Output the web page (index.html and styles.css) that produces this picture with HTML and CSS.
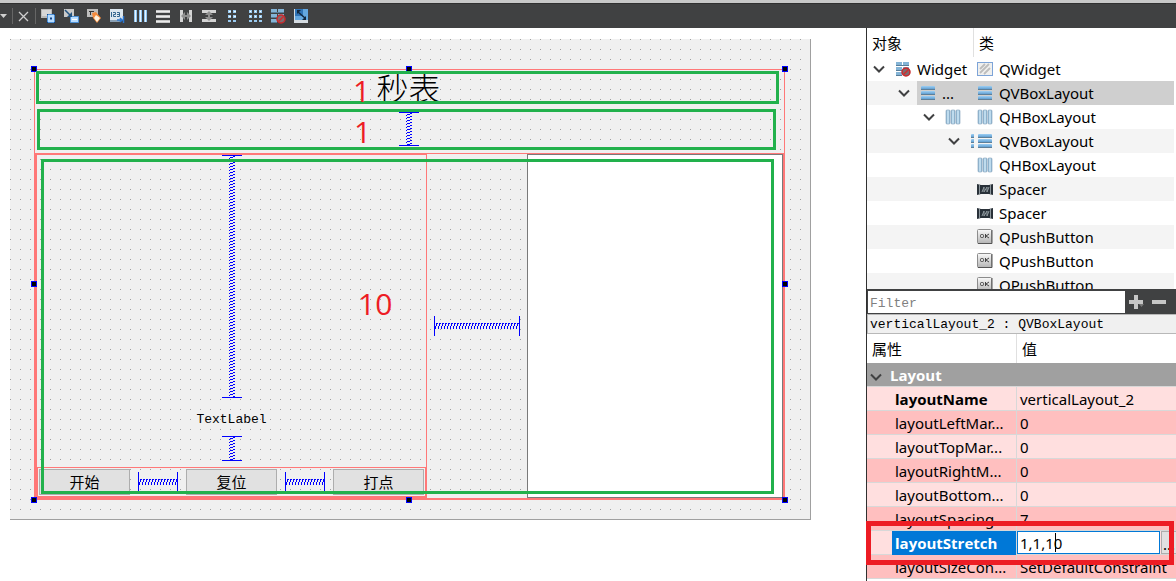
FILE: index.html
```html
<!DOCTYPE html>
<html lang="zh-CN">
<head>
<meta charset="utf-8">
<title>Widget - 设计</title>
<link rel="stylesheet" href="styles.css">
</head>
<body>
<svg class="defs" aria-hidden="true">
  <defs>
    <pattern id="zig-h" width="3" height="6" patternUnits="userSpaceOnUse"><path d="M2 0h1v1h-1zM1 0h1v3h-1zM0 3h1v3h-1z" fill="#00f" shape-rendering="crispEdges"/></pattern>
    <pattern id="zig-v" width="6" height="3" patternUnits="userSpaceOnUse"><path d="M4 0h2v1h-2zM1 1h3v1h-3zM0 2h1v1h-1z" fill="#00f" shape-rendering="crispEdges"/></pattern>
    <linearGradient id="blue-v" x2="0" y2="1"><stop stop-color="#9fd0f4"/><stop offset="1" stop-color="#4c8fc6"/></linearGradient>
    <linearGradient id="blue-h"><stop stop-color="#7fa9c6"/><stop offset=".5" stop-color="#d3ecfb"/><stop offset="1" stop-color="#7fa9c6"/></linearGradient>
    <linearGradient id="grey-v" x2="0" y2="1"><stop stop-color="#fafafa"/><stop offset="1" stop-color="#b4b4b4"/></linearGradient>
    <symbol id="i-rows" viewBox="0 0 16 16"><g fill="url(#blue-v)"><rect x="1" y="1" width="14" height="4" rx="1"/><rect x="1" y="6" width="14" height="4" rx="1"/><rect x="1" y="11" width="14" height="4" rx="1"/></g><path d="M1 4.500h14M1 9.500h14M1 14.500h14" stroke="#5f7f98"/></symbol>
    <symbol id="i-cols" viewBox="0 0 16 16"><g fill="url(#blue-h)" stroke="#7f9fb8" stroke-width=".6"><rect x="1" y="1" width="4" height="14" rx="1"/><rect x="6" y="1" width="4" height="14" rx="1"/><rect x="11" y="1" width="4" height="14" rx="1"/></g></symbol>
    <symbol id="i-break" viewBox="0 0 16 16"><g fill="#84b4d6"><rect x="1" y="1" width="6" height="3"/><rect x="8" y="1" width="6" height="3"/><rect x="1" y="6" width="6" height="3"/><rect x="8" y="6" width="6" height="3"/><rect x="1" y="11" width="6" height="3"/></g><path d="M1 4.500h13M1 9.500h13M1 14.500h6" stroke="#587d98"/><circle cx="11" cy="11" r="4" fill="#7e6c70" stroke="#c9282b" stroke-width="1.500"/><path d="M8.500 13.500l5-5" stroke="#d32a2c" stroke-width="1.500"/></symbol>
    <symbol id="i-widget" viewBox="0 0 16 16"><rect x=".5" y="1.500" width="15" height="13" fill="#f0f0ee" stroke="#7da4d8"/><path d="M3 8l5-5M3 12l9-9M7 13l6-6" stroke="#bdbdbd" stroke-width="1.800"/></symbol>
    <symbol id="i-spacer" viewBox="0 0 16 16"><path d="M0 3l4 1h8l4-1v11l-4-1H4l-4 1z" fill="#293139"/><path d="M2.500 4v9M13.500 4v9" stroke="#8d979d"/><path d="M5 11l2-5v5l3-5v5l2-5" fill="none" stroke="#8f999e"/></symbol>
    <symbol id="i-ok" viewBox="0 0 16 16"><rect x=".5" y=".5" width="14" height="14" rx="1" fill="url(#grey-v)" stroke="#8c8c8c"/><path d="M1 14.500h14V1" fill="none" stroke="#555"/><rect x="3.500" y="5.500" width="3" height="3" rx="1" fill="none" stroke="#444"/><path d="M8.500 5v4M12 5l-3 2 3 2" fill="none" stroke="#444"/></symbol>
    <symbol id="i-chev" viewBox="0 0 12 8"><path d="M1 1.500l5 5 5-5" fill="none" stroke="#404142" stroke-width="2"/></symbol>
  </defs>
</svg>

<header class="toolbar">
  <button class="tool tool-drop" aria-label="菜单"><svg viewBox="0 0 8 16"><path d="M0 6h7l-3.500 4z" fill="#d0d0d0"/></svg></button>
  <span class="bar"></span>
  <button class="tool tool-close" aria-label="关闭"><svg viewBox="0 0 16 16"><path d="M3 4l9 9M12 4l-9 9" stroke="#cfcfcf" stroke-width="1.300"/></svg></button>
  <span class="bar"></span>
  <div class="tools">
    <button class="tool" aria-label="编辑控件"><svg viewBox="0 0 16 16"><path d="M1 1h11v9H1z" fill="#b9b9b9"/><path d="M2 2h9v6H2z" fill="#d6d6d6"/><path d="M7.500 6.500h7v8h-7z" fill="#b8dcff" stroke="#4d91d7"/><path d="M10 9.500h2v2h-2z" fill="#12448a"/><path d="M7 6h1v1H7zM14 6h1v1h-1zM7 14h1v1H7zM14 14h1v1h-1z" fill="#12448a"/></svg></button>
    <button class="tool" aria-label="编辑信号/槽"><svg viewBox="0 0 16 16"><path d="M1 1h10v8H1z" fill="#c9c9c9"/><path d="M7.500 8.500h8v6h-8z" fill="#b8dcff" stroke="#4d91d7"/><path d="M9 11.500h5" stroke="#fff"/><path d="M2 2l6 6" stroke="#225381" stroke-width="1.500"/><path d="M9 4v5H4z" fill="#225381"/></svg></button>
    <button class="tool" aria-label="编辑伙伴"><svg viewBox="0 0 16 16"><path d="M1 1h11v8H1z" fill="#bdbdbd"/><path d="M3 3.500h5M4.500 3v4" stroke="#333"/><path d="M6 5l4-1 5 6-4 5-4-5z" fill="#f58b3d"/><path d="M10 7l4 3-3 4-3-4z" fill="#fff3df"/></svg></button>
    <button class="tool" aria-label="编辑 Tab 顺序"><svg viewBox="0 0 16 16"><path d="M1 1h13v11H1z" fill="#dce7ef"/><path d="M1 12h10v2H1z" fill="#8aa0b4"/><path d="M2.500 4v5M4 4.500h2.500v2H4.500v2h2.500M8 4.500h2.500v4H8M8 6.500h2" fill="none" stroke="#34668e"/><path d="M8 12h5M11 10l2 2-2 2M14.500 8v7" fill="none" stroke="#2b75ce" stroke-width="1.500"/></svg></button>
    <button class="tool" aria-label="水平布局"><svg viewBox="0 0 16 16"><path d="M2 2h3v12H2zM7 2h3v12H7zM12 2h3v12h-3z" fill="#8fc3ee"/><path d="M3 2h1v12H3zM8 2h1v12H8zM13 2h1v12h-1z" fill="#e8f5ff"/></svg></button>
    <button class="tool" aria-label="垂直布局"><svg viewBox="0 0 16 16"><path d="M1 2h14v3H1zM1 7h14v3H1zM1 12h14v3H1z" fill="#c8c8c8"/><path d="M1 3.500h14M1 8.500h14M1 13.500h14" stroke="#ececec"/></svg></button>
    <button class="tool" aria-label="水平分裂器"><svg viewBox="0 0 16 16"><path d="M2 2h3v12H2zM11 2h3v12h-3z" fill="#d4d4d4"/><path d="M3 8l4-4v3h2V4l4 4-4 4V9H7v3z" fill="#8f8f8f"/></svg></button>
    <button class="tool" aria-label="垂直分裂器"><svg viewBox="0 0 16 16"><path d="M1 2h14v3H1zM1 11h14v3H1z" fill="#d4d4d4"/><path d="M8 3l4 4H9v2h3l-4 4-4-4h3V7H4z" fill="#8f8f8f"/></svg></button>
    <button class="tool" aria-label="窗体布局"><svg viewBox="0 0 16 16"><path d="M4 2h3v3H4zM9 2h3v3H9zM4 7h3v3H4zM9 7h3v3H9zM4 12h3v2H4zM9 12h3v2H9z" fill="#9bcbf1"/><path d="M5 3h2v1H5zM10 3h2v1h-2zM5 8h2v1H5zM10 8h2v1h-2z" fill="#eff8ff"/></svg></button>
    <button class="tool" aria-label="栅格布局"><svg viewBox="0 0 16 16"><path d="M2 2h3v3H2zM7 2h3v3H7zM12 2h3v3h-3zM2 7h3v3H2zM7 7h3v3H7zM12 7h3v3h-3zM2 12h3v2H2zM7 12h3v2H7zM12 12h3v2h-3z" fill="#9bcbf1"/><path d="M3 3h1v1H3zM8 3h1v1H8zM13 3h1v1h-1zM3 8h1v1H3zM8 8h1v1H8zM13 8h1v1h-1z" fill="#fff"/></svg></button>
    <button class="tool" aria-label="打破布局"><svg><use href="#i-break"/></svg></button>
    <button class="tool" aria-label="调整大小"><svg viewBox="0 0 16 16"><path d="M1 1h14v14H1z" fill="#d5dce2"/><path d="M2 1h13v11H2z" fill="#64a7de"/><path d="M2 1h8v7H2z" fill="#2f73b5"/><path d="M5 4l7 6" stroke="#10263d" stroke-width="1.500"/><path d="M4 2h4L4 6zM13 12V8l-4 4z" fill="#10263d"/></svg></button>
  </div>
</header>

<div class="workspace">
  <main class="canvas">
    <section class="form">
      <div class="layout-outer">
        <h1 class="form-title">秒表</h1>
        <div class="spacer-row"><div class="vspacer"><svg><rect width="6" height="100%" fill="url(#zig-v)"/></svg></div></div>
        <div class="layout-body">
          <div class="layout-left">
            <div class="vspacer"><svg><rect width="6" height="100%" fill="url(#zig-v)"/></svg></div>
            <span class="text-label">TextLabel</span>
            <div class="vspacer vspacer-small"><svg><rect width="6" height="100%" fill="url(#zig-v)"/></svg></div>
            <div class="button-row">
              <button class="push">开始</button>
              <div class="hspacer"><svg><rect width="100%" height="6" fill="url(#zig-h)"/></svg></div>
              <button class="push">复位</button>
              <div class="hspacer"><svg><rect width="100%" height="6" fill="url(#zig-h)"/></svg></div>
              <button class="push">打点</button>
            </div>
          </div>
          <div class="hspacer hspacer-wide"><svg><rect width="100%" height="6" fill="url(#zig-h)"/></svg></div>
          <div class="text-area"></div>
        </div>
        <i class="handle h-tl"></i><i class="handle h-tc"></i><i class="handle h-tr"></i>
        <i class="handle h-ml"></i><i class="handle h-mr"></i>
        <i class="handle h-bl"></i><i class="handle h-bc"></i><i class="handle h-br"></i>
        <div class="mark mark-title"><span>1</span></div>
        <div class="mark mark-space"><span>1</span></div>
        <div class="mark mark-body"><span>10</span></div>
      </div>
    </section>
  </main>

  <aside class="dock">
    <div class="tree-pane">
      <table class="tree">
        <colgroup><col class="c-object"><col></colgroup>
        <thead><tr><th>对象</th><th>类</th></tr></thead>
        <tbody>
          <tr><td><div class="node lv0"><svg class="chev"><use href="#i-chev"/></svg><span class="name"><svg class="ico"><use href="#i-break"/></svg>Widget</span></div></td><td><div class="cls"><svg class="ico"><use href="#i-widget"/></svg>QWidget</div></td></tr>
          <tr class="selected"><td><div class="node lv1"><svg class="chev"><use href="#i-chev"/></svg><span class="name"><svg class="ico"><use href="#i-rows"/></svg>...</span></div></td><td><div class="cls"><svg class="ico"><use href="#i-rows"/></svg>QVBoxLayout</div></td></tr>
          <tr><td><div class="node lv2"><svg class="chev"><use href="#i-chev"/></svg><span class="name"><svg class="ico"><use href="#i-cols"/></svg></span></div></td><td><div class="cls"><svg class="ico"><use href="#i-cols"/></svg>QHBoxLayout</div></td></tr>
          <tr><td><div class="node lv3"><svg class="chev"><use href="#i-chev"/></svg><span class="name"><svg class="ico"><use href="#i-rows"/></svg></span></div></td><td><div class="cls"><svg class="ico"><use href="#i-rows"/></svg>QVBoxLayout</div></td></tr>
          <tr><td></td><td><div class="cls"><svg class="ico"><use href="#i-cols"/></svg>QHBoxLayout</div></td></tr>
          <tr><td></td><td><div class="cls"><svg class="ico"><use href="#i-spacer"/></svg>Spacer</div></td></tr>
          <tr><td></td><td><div class="cls"><svg class="ico"><use href="#i-spacer"/></svg>Spacer</div></td></tr>
          <tr><td></td><td><div class="cls"><svg class="ico"><use href="#i-ok"/></svg>QPushButton</div></td></tr>
          <tr><td></td><td><div class="cls"><svg class="ico"><use href="#i-ok"/></svg>QPushButton</div></td></tr>
          <tr><td></td><td><div class="cls"><svg class="ico"><use href="#i-ok"/></svg>QPushButton</div></td></tr>
        </tbody>
      </table>
    </div>
    <div class="filter-bar">
      <input class="filter" type="text" placeholder="Filter" aria-label="Filter">
      <button class="fbtn" aria-label="添加"><svg viewBox="0 0 16 16"><path d="M6 1h4v5h5v4h-5v5H6v-5H1V6h5z" fill="#c6c6c6"/><path d="M11 10h5l-2.500 3z" fill="#777"/></svg></button>
      <button class="fbtn" aria-label="删除"><svg viewBox="0 0 16 16"><path d="M1 6h14v4H1z" fill="#c6c6c6"/></svg></button>
    </div>
    <div class="object-name">verticalLayout_2 : QVBoxLayout</div>
    <div class="props-pane">
      <table class="props">
        <colgroup><col class="c-prop"><col></colgroup>
        <thead><tr><th>属性</th><th>值</th></tr></thead>
        <tbody>
          <tr class="group"><th colspan="2"><svg class="chev"><use href="#i-chev"/></svg>Layout</th></tr>
          <tr><td><b>layoutName</b></td><td>verticalLayout_2</td></tr>
          <tr><td>layoutLeftMar...</td><td>0</td></tr>
          <tr><td>layoutTopMar...</td><td>0</td></tr>
          <tr><td>layoutRightM...</td><td>0</td></tr>
          <tr><td>layoutBottom...</td><td>0</td></tr>
          <tr><td>layoutSpacing</td><td>7</td></tr>
          <tr class="editing"><td><label for="stretch">layoutStretch</label></td><td><div class="editor"><div class="field"><input id="stretch" type="text" value="1,1,10"><i class="caret"></i></div><button class="more">...</button></div></td></tr>
          <tr><td>layoutSizeCon...</td><td>SetDefaultConstraint</td></tr>
        </tbody>
      </table>
      <div class="mark-stretch"></div>
    </div>
  </aside>
</div>
</body>
</html>
```
FILE: styles.css
```css
* { box-sizing: border-box; }
body {
  margin: 0;
  height: 100vh;
  display: flex;
  flex-direction: column;
  overflow: hidden;
  background: #fff;
  color: #000;
  font: 15px/24px "Noto Sans", "Noto Sans CJK SC", sans-serif;
}
b, label, .group { font-family: "Open Sans", sans-serif; }
button, input { font: inherit; color: inherit; margin: 0; padding: 0; border: 0; border-radius: 0; background: none; }
svg { display: block; }
.defs { position: absolute; width: 0; height: 0; }

/* toolbar */
.toolbar {
  display: flex;
  align-items: center;
  height: 28px;
  flex: none;
  border-top: 3px solid #c8c8c8;
  background: #404142;
  box-shadow: inset 0 1px #303030;
}
.tool { width: 16px; height: 16px; flex: none; }
.tool svg { width: 16px; height: 16px; }
.tool-drop, .tool-drop svg { width: 8px; }
.bar { width: 1px; height: 16px; margin: 0 4px; background: #666; }
.tool-close { margin: 0 -1px; }
.tools { display: flex; gap: 7px; }

.workspace { flex: 1; display: flex; min-height: 0; }

/* form canvas */
.canvas { flex: 1; display: flex; min-width: 0; padding: 11px 55px 61px 10px; }
.form {
  flex: 1;
  display: flex;
  padding: 30px 25px 19px 24px;
  border: solid #a0a0a0;
  border-width: 0 1px 1px 0;
  background-color: #f0f0f0;
  background-image: linear-gradient(90deg, transparent 1px, #f0f0f0 1px), linear-gradient(#a0a0a0 1px, #f0f0f0 1px);
  background-size: 10px 10px;
}
.layout-outer {
  position: relative;
  flex: 1;
  display: flex;
  flex-direction: column;
  border: 1px solid #ff7878;
}
.form-title {
  margin: 0;
  height: 35px;
  padding-right: 2px;
  text-align: center;
  font: 300 32px/34px "Noto Sans CJK SC", sans-serif;
}
.spacer-row { display: flex; justify-content: center; height: 48px; padding: 7px 2px 7px 0; }
.vspacer {
  width: 20px;
  display: flex;
  justify-content: center;
  border: solid #00f;
  border-width: 1px 0;
}
.vspacer svg { width: 6px; height: 100%; }
.layout-body { flex: 1; display: flex; border: 1px solid #ff7878; min-height: 0; }
.layout-left {
  flex: 389 1 0;
  display: flex;
  flex-direction: column;
  align-items: center;
  border: 1px solid #ff7878;
}
.layout-left > .vspacer { flex: 1; min-height: 0; }
.layout-left > .vspacer-small { flex: none; height: 25px; margin-bottom: 6px; }
.text-label { margin: 10px 0 4px; font: 13px/24px "Liberation Mono", monospace; }
.button-row {
  align-self: stretch;
  display: flex;
  align-items: center;
  gap: 8px;
  height: 30px;
  padding: 0 1px;
  border: 1px solid #ff7878;
}
.push {
  flex: 1;
  height: 26px;
  border: 1px solid #adadad;
  background: #e1e1e1;
  font: 15px/24px "Noto Sans CJK SC", sans-serif;
}
.hspacer {
  width: 40px;
  height: 20px;
  display: flex;
  align-items: center;
  border: solid #00f;
  border-width: 0 1px;
}
.hspacer svg { width: 100%; height: 6px; }
.hspacer-wide { flex: 84 1 0; align-self: center; margin: 0 7px; }
.text-area { flex: 254 1 0; border: 1px solid #7a7a7a; background: #fff; }

/* selection handles */
.handle { position: absolute; width: 6px; height: 6px; border: 1px solid #00f; background: #000; }
.h-tl, .h-tc, .h-tr { top: -4px; }
.h-bl, .h-bc, .h-br { bottom: -4px; }
.h-ml, .h-mr { top: calc(50% - 4px); }
.h-tl, .h-ml, .h-bl { left: -4px; }
.h-tr, .h-mr, .h-br { right: -4px; }
.h-tc, .h-bc { left: calc(50% - 4px); }

/* annotations lying over the form */
.mark { position: absolute; border: 3px solid #22b14c; color: #ed1c24; font: 30px/36px "Open Sans", sans-serif; }
.mark span { position: absolute; left: 314px; top: -1px; }
.mark-title { left: 1px; right: 5px; top: 1px; height: 33px; }
.mark-space { left: 2px; right: 8px; top: 39px; height: 41px; }
.mark-space span { top: 2px; }
.mark-body { left: 6px; right: 10px; top: 89px; bottom: 5px; }
.mark-body span { top: 124px; }

/* dock */
.dock { width: 310px; flex: none; display: flex; flex-direction: column; border-left: 1px solid #303030; }
table { width: 100%; table-layout: fixed; border-collapse: separate; border-spacing: 0; }
th, td { height: 24px; padding: 0; text-align: left; font-weight: 400; white-space: nowrap; overflow: hidden; }
thead th { height: 29px; padding: 0 5px; }
.tree-pane { flex: 1; min-height: 0; overflow: hidden; padding-right: 2px; }
.c-object { width: 107px; }
.tree thead th:first-child { border-right: 1px solid #e0e0e0; }
.tree tbody tr:nth-child(even) { background: #f4f4f4; }
.node, .cls, .name { display: flex; align-items: center; height: 24px; }
.ico { width: 16px; height: 16px; flex: none; margin-right: 6px; }
.name { flex: 1; min-width: 0; overflow: hidden; padding-left: 3px; }
.cls { padding-left: 3px; }
.chev { width: 12px; height: 8px; flex: none; margin-right: 7px; }
.lv0 { padding-left: 6px; }
.lv1 { padding-left: 31px; }
.lv2 { padding-left: 56px; }
.lv3 { padding-left: 81px; }
.selected .name, .selected .cls { background: #cfcfcf; }

.filter-bar { display: flex; align-items: center; gap: 7px; height: 25px; padding: 2px 1px 1px; background: #404142; }
.filter { width: 257px; height: 22px; padding: 2px 2px 0; margin-right: -4px; background: #fff; font: 13px/20px "Liberation Mono", monospace; }
.filter::placeholder { color: #808080; opacity: 1; }
.fbtn, .fbtn svg { width: 16px; height: 16px; }
.object-name {
  height: 20px;
  padding: 0 2px;
  border: 1px solid #b8b8b8;
  border-right: 0;
  background: #f0f0f0;
  font: 13px/20px "Liberation Mono", monospace;
}
.props-pane { position: relative; padding-bottom: 2px; }
.c-prop { width: 150px; }
.props thead th:first-child { border-right: 1px solid #e0e0e0; }
.props tbody td { padding-left: 3px; box-shadow: inset 0 -1px #d8d8d8; }
.props tbody td:first-child { padding-left: 28px; border-right: 1px solid #d8d8d8; }
.props tbody tr:nth-child(even) { background: #ffdfdf; }
.props tbody tr:nth-child(odd) { background: #ffbfbf; }
.props tbody .group th { padding-left: 3px; background: #a0a0a0; box-shadow: inset 0 -1px #d8d8d8; color: #fff; font-weight: 700; }
.group .chev { display: inline-block; margin-right: 8px; }
.props tbody .editing td:first-child { padding-left: 25px; }
.props tbody .editing td:last-child { padding-left: 0; }
.editing label { display: block; padding-left: 3px; background: #0078d7; color: #fff; font-weight: 700; }
.editor { display: flex; gap: 1px; height: 24px; padding-bottom: 1px; }
.field { position: relative; flex: 1; border: 1px solid #0078d7; background: #fff; }
.field input { width: 100%; height: 21px; padding: 1px 0 0 2px; display: block; }
.caret { position: absolute; left: 37px; top: 1px; width: 1px; height: 19px; background: #000; }
.more { width: 15px; border: 1px solid #adadad; border-right: 0; background: #e1e1e1; }
.mark-stretch { position: absolute; left: -1px; right: 2px; bottom: 16px; height: 44px; border: 5px solid #ed1c24; }
```
